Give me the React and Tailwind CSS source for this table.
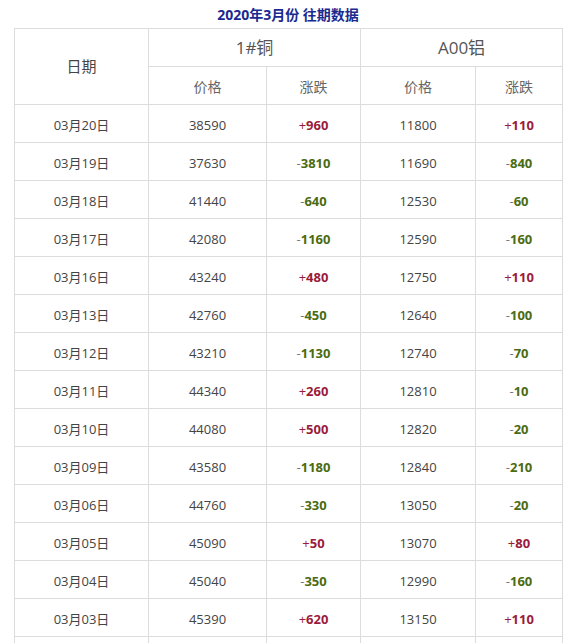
const rows = [
    ['03月20日', '38590', '+960', '11800', '+110'],
    ['03月19日', '37630', '-3810', '11690', '-840'],
    ['03月18日', '41440', '-640', '12530', '-60'],
    ['03月17日', '42080', '-1160', '12590', '-160'],
    ['03月16日', '43240', '+480', '12750', '+110'],
    ['03月13日', '42760', '-450', '12640', '-100'],
    ['03月12日', '43210', '-1130', '12740', '-70'],
    ['03月11日', '44340', '+260', '12810', '-10'],
    ['03月10日', '44080', '+500', '12820', '-20'],
    ['03月09日', '43580', '-1180', '12840', '-210'],
    ['03月06日', '44760', '-330', '13050', '-20'],
    ['03月05日', '45090', '+50', '13070', '+80'],
    ['03月04日', '45040', '-350', '12990', '-160'],
    ['03月03日', '45390', '+620', '13150', '+110'],
    ['03月02日', '44770', '+390', '13040', '+40'],
];

function Change({ value }) {
    const up = value.startsWith('+');
    return (
        <span className={up ? 'text-[#9b1b3b]' : 'text-[#4b6b12]'}>
            <span className={up ? 'font-normal' : 'font-normal text-[#777]'}>{value[0]}</span>
            <span className="font-bold">{value.slice(1)}</span>
        </span>
    );
}

const cell = 'h-[38px] border border-[#dcdcdc] p-0 text-center leading-none';
const bodyCell = `${cell} pt-[4px]`;

export default function App() {
    return (
        <div
            className="min-h-screen bg-white pl-[14px] pr-[12px]"
            style={{ fontFamily: '"Open Sans", "Noto Sans CJK SC", sans-serif' }}
        >
            <h1 className="flex h-[28px] items-center justify-center text-[14px] font-bold text-[#1b2a8f]">
                2020年3月份 往期数据
            </h1>
            <table className="w-[548px] table-fixed border-collapse">
                <colgroup>
                    <col className="w-[134px]" />
                    <col className="w-[118px]" />
                    <col className="w-[94px]" />
                    <col className="w-[115px]" />
                    <col className="w-[87px]" />
                </colgroup>
                <thead>
                    <tr>
                        <th rowSpan={2} className={`${cell} text-[15px] font-normal text-[#444]`}>日期</th>
                        <th colSpan={2} className={`${cell} text-[17px] font-normal text-[#555]`}>1#铜</th>
                        <th colSpan={2} className={`${cell} text-[17px] font-normal text-[#555]`}>A00铝</th>
                    </tr>
                    <tr>
                        {['价格', '涨跌', '价格', '涨跌'].map((label, i) => (
                            <th key={i} className={`${cell} pt-[2px] text-[14px] font-normal text-[#666]`}>{label}</th>
                        ))}
                    </tr>
                </thead>
                <tbody className="text-[13px] text-[#444]">
                    {rows.map(([date, cu, cuChange, al, alChange]) => (
                        <tr key={date}>
                            <td className={bodyCell}>{date}</td>
                            <td className={bodyCell}>{cu}</td>
                            <td className={bodyCell}><Change value={cuChange} /></td>
                            <td className={bodyCell}>{al}</td>
                            <td className={bodyCell}><Change value={alChange} /></td>
                        </tr>
                    ))}
                </tbody>
            </table>
        </div>
    );
}
